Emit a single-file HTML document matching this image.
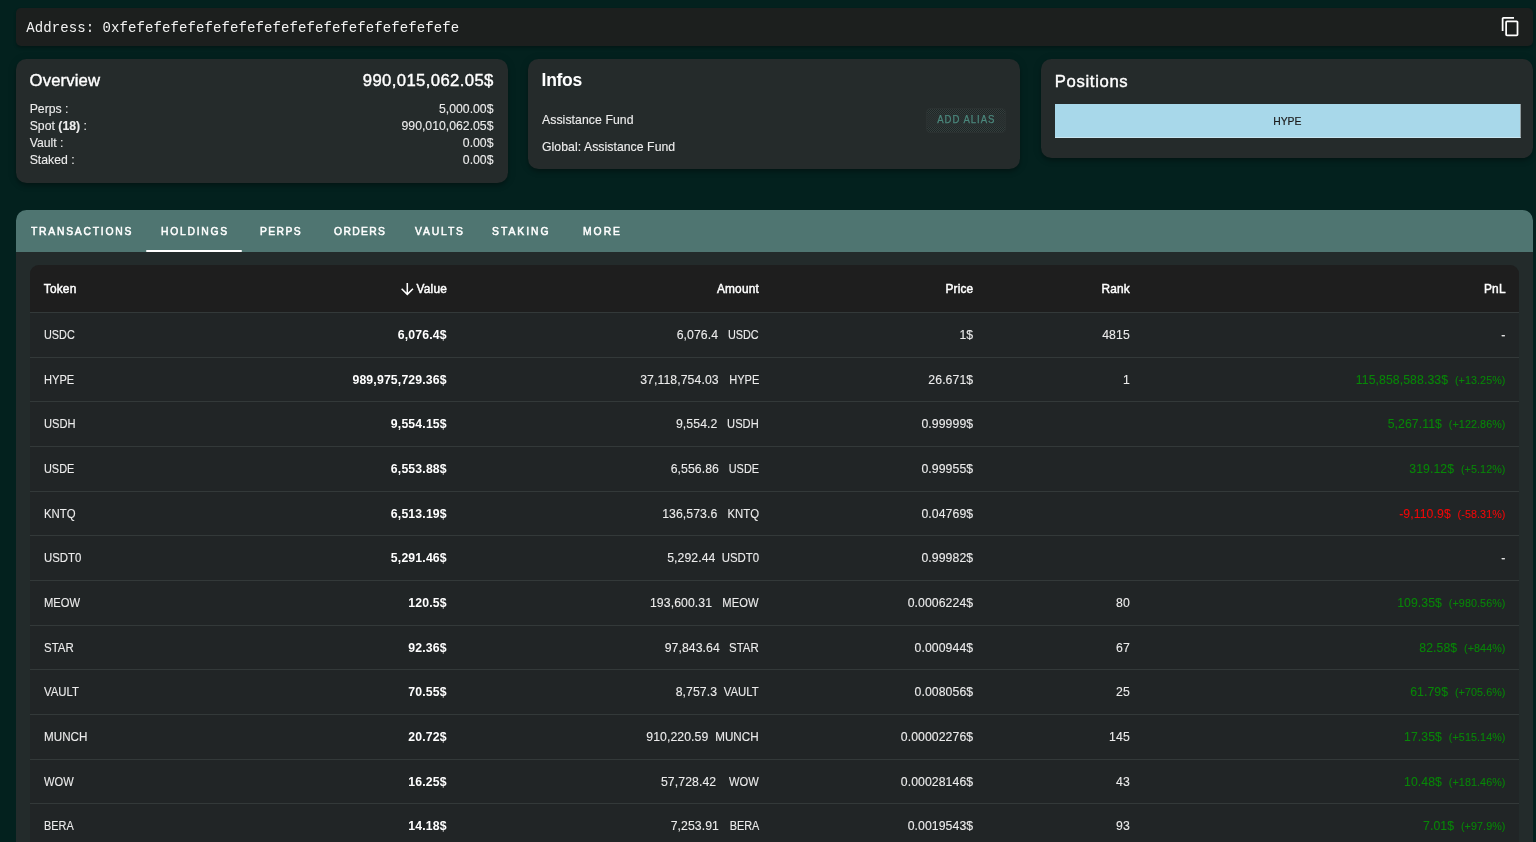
<!DOCTYPE html>
<html lang="en">
<head>
<meta charset="utf-8">
<title>Address</title>
<style>
*{box-sizing:border-box;margin:0;padding:0}
html,body{width:1536px;height:842px;overflow:hidden;background:#03211e;}
body{position:relative;font-family:"Liberation Sans",sans-serif;color:#fff;font-size:12.25px;line-height:17.5px}
#root{position:absolute;left:0;top:0;width:1536px;height:842px;will-change:transform}
.abs{position:absolute}
#addr{left:16px;top:7.6px;width:1516.6px;height:38.3px;background:#1c1f1e;border-radius:5px;box-shadow:0 2px 3px rgba(0,0,0,.25)}
#addr .t{position:absolute;left:10.2px;top:10.5px;font-family:"Liberation Mono",monospace;font-size:14px;line-height:20px;letter-spacing:.09px;color:#f2f2f2;white-space:pre}
#copy{left:1500.2px;top:15.5px;width:21px;height:21px}
.card{position:absolute;background:#252b2b;border-radius:10.5px;box-shadow:0 2px 4px -1px rgba(0,0,0,.2),0 4px 5px rgba(0,0,0,.14),0 1px 10px rgba(0,0,0,.12)}
#ov{left:16px;top:59.1px;width:492px;height:123.5px}
#infos{left:528.2px;top:59.1px;width:492px;height:109.5px}
#pos{left:1041px;top:59.1px;width:491.6px;height:99.3px}
.h6{position:absolute;font-size:17.5px;line-height:28px;white-space:nowrap}
.med{-webkit-text-stroke:.4px #fff;font-size:16.7px}
.ovrow{position:absolute;left:13.7px;right:14.5px;display:flex;justify-content:space-between;white-space:nowrap;color:#ededed;-webkit-text-stroke:.1px #ededed}
.inf{color:#ededed;white-space:nowrap;-webkit-text-stroke:.12px #ededed}
#alias{left:397.8px;top:49.3px;width:80.2px;height:24.3px;border:1px solid #2b3131;border-radius:4px;background:repeating-conic-gradient(#353c3c 0 25%,#1d2726 0 50%) 0 0/2px 2px;text-align:center;white-space:nowrap}
#alias:before{content:"";position:absolute;left:0;right:0;top:5px;height:12.5px;background:rgba(42,48,48,.72)}
#alias span{position:relative;display:inline-block;color:#4b887d;-webkit-text-stroke:.25px #4b887d;font-size:10.3px;line-height:22.2px;letter-spacing:1.05px;padding-left:1px;transform:scaleX(.93)}
#bar{left:14px;top:45.1px;width:465.6px;height:34.1px;background:#a8d8ea;border-bottom:1px solid #c9e6f1;border-right:1.5px solid #8f9a9d;color:#1c1c1c;font-size:10.4px;line-height:36.4px;text-align:center;-webkit-text-stroke:.2px #1c1c1c}
#tabs{left:16px;top:210px;width:1516.8px;height:41.7px;background:#4f7571;border-radius:10.5px 10.5px 0 0}
.tab{position:absolute;top:0;height:42px;line-height:42px;font-size:11.5px;color:#fff;-webkit-text-stroke:.55px #fff;white-space:nowrap;transform:scaleX(.9);transform-origin:0 50%}
#ind{left:130px;top:39.5px;width:96.1px;height:2.5px;background:#fff;border-radius:1px}
#panel{left:16px;top:252px;width:1516.8px;height:620px;background:#232b2b}
#tbl{left:13.8px;top:12.7px;width:1489.4px;height:620px;background:#212526;border-radius:9px 9px 0 0;overflow:hidden}
#thead{left:0;top:0;width:100%;height:48.3px;background:#1e1e1e;border-bottom:1px solid #333939}
.r{position:absolute;left:0;width:100%;height:44.67px;border-bottom:1px solid #333939}
.c{position:absolute;top:13.9px;white-space:nowrap;color:#ececec;letter-spacing:.08px;-webkit-text-stroke:.1px currentColor}
#thead .c{top:16.7px;color:#fff;-webkit-text-stroke:.45px #fff;font-weight:normal;font-size:11.9px;letter-spacing:.18px;transform:none;margin-right:-.2px}
.c1{left:14px;transform-origin:0 50%;letter-spacing:0}
.c2{right:1072.4px;font-weight:bold;color:#fff;letter-spacing:.16px;-webkit-text-stroke:0}
.c3{right:802px}
.c3s{right:760.4px;transform-origin:100% 50%;letter-spacing:0}
.c4{right:546px}
.c5{right:389.4px}
.c6{right:13.7px}
.g{color:#088608}.rd{color:#f00808}
.pc{font-size:10.75px;margin-left:6.8px}
#sort{left:367.8px;top:15px;width:18.6px;height:18.6px}
</style>
</head>
<body><div id="root">
<div id="addr" class="abs"><span class="t">Address: 0xfefefefefefefefefefefefefefefefefefefefe</span></div>
<svg id="copy" class="abs" viewBox="0 0 24 24"><path fill="#fff" d="M16 1H4c-1.1 0-2 .9-2 2v14h2V3h12V1zm3 4H8c-1.1 0-2 .9-2 2v14c0 1.1.9 2 2 2h11c1.1 0 2-.9 2-2V7c0-1.1-.9-2-2-2zm0 16H8V7h11v14z"/></svg>

<div id="ov" class="card">
  <div class="h6 med" style="left:13.6px;top:8px;letter-spacing:.12px">Overview</div>
  <div class="h6 med" style="right:14.3px;top:8px;letter-spacing:.38px">990,015,062.05$</div>
  <div class="ovrow" style="top:42.0px"><span>Perps :</span><span>5,000.00$</span></div>
  <div class="ovrow" style="top:59.0px"><span>Spot <b>(18)</b> :</span><span>990,010,062.05$</span></div>
  <div class="ovrow" style="top:76.0px"><span>Vault :</span><span>0.00$</span></div>
  <div class="ovrow" style="top:93.0px"><span>Staked :</span><span>0.00$</span></div>
</div>

<div id="infos" class="card">
  <div class="h6" style="left:13.4px;top:7px;font-weight:bold;letter-spacing:-.3px">Infos</div>
  <div class="abs inf" style="left:13.8px;top:52.5px;letter-spacing:.07px">Assistance Fund</div>
  <div class="abs inf" style="left:13.8px;top:80px;letter-spacing:.05px">Global: Assistance Fund</div>
  <div id="alias" class="abs"><span>ADD ALIAS</span></div>
</div>

<div id="pos" class="card">
  <div class="h6 med" style="left:13.8px;top:8.8px;letter-spacing:.65px">Positions</div>
  <div id="bar" class="abs">HYPE</div>
</div>

<div id="tabs" class="abs">
<div class="tab" style="left:15.20px;letter-spacing:1.951px">TRANSACTIONS</div>
<div class="tab" style="left:145.40px;letter-spacing:1.911px">HOLDINGS</div>
<div class="tab" style="left:244.40px;letter-spacing:1.532px">PERPS</div>
<div class="tab" style="left:318.00px;letter-spacing:1.494px">ORDERS</div>
<div class="tab" style="left:398.50px;letter-spacing:2.060px">VAULTS</div>
<div class="tab" style="left:476.00px;letter-spacing:2.193px">STAKING</div>
<div class="tab" style="left:567.00px;letter-spacing:2.204px">MORE</div>
  <div id="ind" class="abs"></div>
</div>

<div id="panel" class="abs">
 <div id="tbl" class="abs">
  <div id="thead" class="abs">
    <span class="c c1">Token</span>
    <svg id="sort" class="abs" viewBox="0 0 24 24"><path fill="#fff" d="M20 12l-1.41-1.41L13 16.17V4h-2v12.17l-5.58-5.59L4 12l8 8 8-8z"/></svg>
    <span class="c c2">Value</span>
    <span class="c c3" style="right:760.4px">Amount</span>
    <span class="c c4">Price</span>
    <span class="c c5">Rank</span>
    <span class="c c6">PnL</span>
  </div>
<div class="r" style="top:48.30px"><span class="c c1" style="left:13.90px;transform:scaleX(0.887)">USDC</span><span class="c c2">6,076.4$</span><span class="c c3" style="right:801.09px">6,076.4</span><span class="c c3s" style="right:760.31px;transform:scaleX(0.887)">USDC</span><span class="c c4">1$</span><span class="c c5">4815</span><span class="c c6">-</span></div>
<div class="r" style="top:92.97px"><span class="c c1" style="left:13.90px;transform:scaleX(0.905)">HYPE</span><span class="c c2">989,975,729.36$</span><span class="c c3" style="right:800.50px">37,118,754.03</span><span class="c c3s" style="right:760.30px;transform:scaleX(0.905)">HYPE</span><span class="c c4">26.671$</span><span class="c c5">1</span><span class="c c6 g">115,858,588.33$<span class="pc">(+13.25%)</span></span></div>
<div class="r" style="top:137.64px"><span class="c c1" style="left:13.90px;transform:scaleX(0.910)">USDH</span><span class="c c2">9,554.15$</span><span class="c c3" style="right:801.79px">9,554.2</span><span class="c c3s" style="right:760.31px;transform:scaleX(0.910)">USDH</span><span class="c c4">0.99999$</span><span class="c c5"></span><span class="c c6 g">5,267.11$<span class="pc">(+122.86%)</span></span></div>
<div class="r" style="top:182.31px"><span class="c c1" style="left:13.90px;transform:scaleX(0.890)">USDE</span><span class="c c2">6,553.88$</span><span class="c c3" style="right:800.20px">6,556.86</span><span class="c c3s" style="right:760.30px;transform:scaleX(0.890)">USDE</span><span class="c c4">0.99955$</span><span class="c c5"></span><span class="c c6 g">319.12$<span class="pc">(+5.12%)</span></span></div>
<div class="r" style="top:226.98px"><span class="c c1" style="left:13.90px;transform:scaleX(0.929)">KNTQ</span><span class="c c2">6,513.19$</span><span class="c c3" style="right:801.80px">136,573.6</span><span class="c c3s" style="right:760.30px;transform:scaleX(0.929)">KNTQ</span><span class="c c4">0.04769$</span><span class="c c5"></span><span class="c c6 rd">-9,110.9$<span class="pc">(-58.31%)</span></span></div>
<div class="r" style="top:271.65px"><span class="c c1" style="left:13.90px;transform:scaleX(0.931)">USDT0</span><span class="c c2">5,291.46$</span><span class="c c3" style="right:803.70px">5,292.44</span><span class="c c3s" style="right:760.30px;transform:scaleX(0.931)">USDT0</span><span class="c c4">0.99982$</span><span class="c c5"></span><span class="c c6">-</span></div>
<div class="r" style="top:316.32px"><span class="c c1" style="left:13.90px;transform:scaleX(0.915)">MEOW</span><span class="c c2">120.5$</span><span class="c c3" style="right:807.10px">193,600.31</span><span class="c c3s" style="right:760.30px;transform:scaleX(0.915)">MEOW</span><span class="c c4">0.0006224$</span><span class="c c5">80</span><span class="c c6 g">109.35$<span class="pc">(+980.56%)</span></span></div>
<div class="r" style="top:360.99px"><span class="c c1" style="left:13.90px;transform:scaleX(0.935)">STAR</span><span class="c c2">92.36$</span><span class="c c3" style="right:799.30px">97,843.64</span><span class="c c3s" style="right:760.30px;transform:scaleX(0.935)">STAR</span><span class="c c4">0.000944$</span><span class="c c5">67</span><span class="c c6 g">82.58$<span class="pc">(+844%)</span></span></div>
<div class="r" style="top:405.66px"><span class="c c1" style="left:13.90px;transform:scaleX(0.929)">VAULT</span><span class="c c2">70.55$</span><span class="c c3" style="right:802.09px">8,757.3</span><span class="c c3s" style="right:760.30px;transform:scaleX(0.929)">VAULT</span><span class="c c4">0.008056$</span><span class="c c5">25</span><span class="c c6 g">61.79$<span class="pc">(+705.6%)</span></span></div>
<div class="r" style="top:450.33px"><span class="c c1" style="left:13.90px;transform:scaleX(0.952)">MUNCH</span><span class="c c2">20.72$</span><span class="c c3" style="right:810.80px">910,220.59</span><span class="c c3s" style="right:760.30px;transform:scaleX(0.952)">MUNCH</span><span class="c c4">0.00002276$</span><span class="c c5">145</span><span class="c c6 g">17.35$<span class="pc">(+515.14%)</span></span></div>
<div class="r" style="top:495.00px"><span class="c c1" style="left:13.90px;transform:scaleX(0.909)">WOW</span><span class="c c2">16.25$</span><span class="c c3" style="right:803.00px">57,728.42</span><span class="c c3s" style="right:760.31px;transform:scaleX(0.909)">WOW</span><span class="c c4">0.00028146$</span><span class="c c5">43</span><span class="c c6 g">10.48$<span class="pc">(+181.46%)</span></span></div>
<div class="r" style="top:539.67px"><span class="c c1" style="left:13.90px;transform:scaleX(0.890)">BERA</span><span class="c c2">14.18$</span><span class="c c3" style="right:800.20px">7,253.91</span><span class="c c3s" style="right:760.30px;transform:scaleX(0.890)">BERA</span><span class="c c4">0.0019543$</span><span class="c c5">93</span><span class="c c6 g">7.01$<span class="pc">(+97.9%)</span></span></div>
 </div>
</div>
</div></body>
</html>
